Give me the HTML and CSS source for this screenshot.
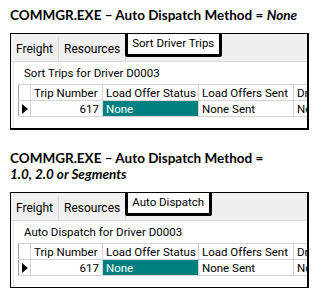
FILE: index.html
```html
<!DOCTYPE html>
<html lang="en">
<head>
  <meta charset="UTF-8" />
  <meta name="viewport" content="width=device-width, initial-scale=1.0"/>
  <title>Auto Dispatch Method</title>
  <link rel="stylesheet" href="styles.css">
</head>
<body>

  <!-- Method = None -->
  <section class="demo">
    <h2 class="caption">COMMGR.EXE &ndash; Auto Dispatch Method = <em>None</em></h2>
    <div class="window">
      <div class="tabs">
        <span class="tab">Freight</span>
        <span class="tab">Resources</span>
        <span class="tab active">Sort Driver Trips</span>
      </div>
      <div class="panel">
        <div class="panel-title">Sort Trips for Driver D0003</div>
        <table class="grid">
          <tr>
            <th class="rowhead"></th>
            <th>Trip Number</th>
            <th>Load Offer Status</th>
            <th>Load Offers Sent</th>
            <th>Driver</th>
          </tr>
          <tr>
            <td class="rowhead"><span class="pointer"></span></td>
            <td class="num">617</td>
            <td class="status">None</td>
            <td>None Sent</td>
            <td>No</td>
          </tr>
        </table>
      </div>
    </div>
  </section>

  <!-- Method = 1.0, 2.0 or Segments -->
  <section class="demo second">
    <h2 class="caption">COMMGR.EXE &ndash; Auto Dispatch Method =<br><em>1.0, 2.0 or Segments</em></h2>
    <div class="window">
      <div class="tabs">
        <span class="tab">Freight</span>
        <span class="tab">Resources</span>
        <span class="tab active">Auto Dispatch</span>
      </div>
      <div class="panel">
        <div class="panel-title">Auto Dispatch for Driver D0003</div>
        <table class="grid">
          <tr>
            <th class="rowhead"></th>
            <th>Trip Number</th>
            <th>Load Offer Status</th>
            <th>Load Offers Sent</th>
            <th>Driver</th>
          </tr>
          <tr>
            <td class="rowhead"><span class="pointer"></span></td>
            <td class="num">617</td>
            <td class="status">None</td>
            <td>None Sent</td>
            <td>No</td>
          </tr>
        </table>
      </div>
    </div>
  </section>

</body>
</html>
```

FILE: styles.css
```css
body {
  margin: 0;
  padding: 0 10px;
  background: white;
  color: black;
  font-family: Roboto, sans-serif;
}

.demo {
  padding-top: 7px;
}

.demo.second {
  padding-top: 20px;
}

.caption {
  margin: 0 0 10px;
  font-family: Lato, sans-serif;
  font-size: 13.5px;
  line-height: 16px;
  font-weight: bold;
  color: #000;
}

.window {
  width: 296px;
  border: 1px solid #000;
  border-right-width: 2px;
  border-bottom-width: 2px;
  overflow: hidden;
}

/* tab strip */
.tabs {
  display: flex;
  align-items: flex-end;
  height: 27px;
  background: #f0f0f0;
  border-bottom: 1px solid #d9d9d9;
}

.tab {
  height: 24px;
  line-height: 25px;
  padding: 0 5px;
  font-size: 12px;
  border-right: 1px solid #d9d9d9;
  background: #f0f0f0;
}

.tab.active {
  height: 21px;
  line-height: 21px;
  margin: -4px 0 3px -1px;
  padding: 0 5px 0 4px;
  font-size: 11.5px;
  background: white;
  border: 3px solid #000;
  border-radius: 2px;
  align-self: flex-start;
}

/* content */
.panel {
  height: 66px;
  padding: 0 0 0 4px;
  margin-left: 2px;
  border-left: 1px solid #e3e3e3;
  font-size: 11.5px;
}

.panel-title {
  height: 22px;
  line-height: 22px;
  padding-left: 6px;
}

.grid {
  border-collapse: collapse;
  table-layout: fixed;
  width: 320px;
  border-left: 1px solid #a0a0a0;
}

.grid th,
.grid td {
  height: 15px;
  padding: 0 3px;
  font-weight: normal;
  white-space: nowrap;
  overflow: hidden;
  text-align: left;
  border-top: 1px solid #d4d4d4;
  border-right: 1px solid #d4d4d4;
  border-bottom: 1px solid #d4d4d4;
}

.grid th:nth-child(2) { width: 65px; }
.grid th:nth-child(3) { width: 89px; }
.grid th:nth-child(4) { width: 88px; }

.grid .rowhead {
  width: 5px;
  padding: 0 3px;
}

.grid .num {
  text-align: right;
}

.grid .status {
  background: #008080;
  color: white;
}

.pointer {
  display: block;
  width: 0;
  height: 0;
  border-top: 5px solid transparent;
  border-bottom: 5px solid transparent;
  border-left: 6px solid #000;
}
```
